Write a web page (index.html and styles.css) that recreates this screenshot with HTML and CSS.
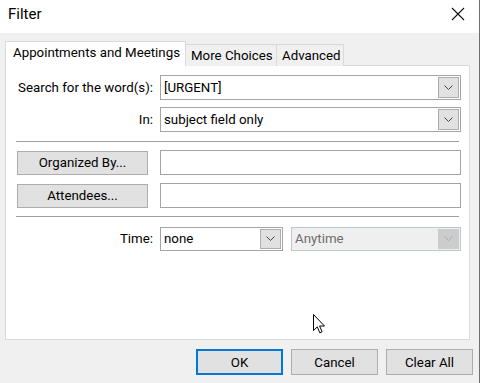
FILE: index.html
```html
<!DOCTYPE html>
<html lang="en">
<head>
    <meta charset="UTF-8">
    <title>Filter</title>
    <link rel="stylesheet" href="styles.css">
</head>
<body>
    <div class="window">
        <div class="titlebar">
            <span class="title">Filter</span>
            <svg class="close-icon" width="14" height="14" viewBox="0 0 14 14">
                <path d="M1 1 L13 13 M13 1 L1 13" stroke="#111" stroke-width="1.1" fill="none"/>
            </svg>
        </div>

        <div class="content">
            <div class="tabs">
                <div class="tab active">Appointments and Meetings</div>
                <div class="tab">More Choices</div>
                <div class="tab">Advanced</div>
            </div>

            <div class="panel">
                <div class="row">
                    <span class="label">Search for the word(s):</span>
                    <div class="combo">
                        <span class="combo-text">[URGENT]</span>
                        <span class="combo-arrow">
                            <svg width="9" height="6" viewBox="0 0 9 6"><polyline points="0.5,0.5 4.5,4.5 8.5,0.5" fill="none" stroke="#444" stroke-width="1"/></svg>
                        </span>
                    </div>
                </div>
                <div class="row">
                    <span class="label">In:</span>
                    <div class="combo">
                        <span class="combo-text">subject field only</span>
                        <span class="combo-arrow">
                            <svg width="9" height="6" viewBox="0 0 9 6"><polyline points="0.5,0.5 4.5,4.5 8.5,0.5" fill="none" stroke="#444" stroke-width="1"/></svg>
                        </span>
                    </div>
                </div>

                <div class="separator"></div>

                <div class="row row-button">
                    <button class="btn field-btn">Organized By...</button>
                    <input class="textbox" type="text">
                </div>
                <div class="row row-button">
                    <button class="btn field-btn">Attendees...</button>
                    <input class="textbox" type="text">
                </div>

                <div class="separator separator-low"></div>

                <div class="row row-time">
                    <span class="label">Time:</span>
                    <div class="time-combos">
                        <div class="combo combo-small">
                            <span class="combo-text">none</span>
                            <span class="combo-arrow">
                                <svg width="9" height="6" viewBox="0 0 9 6"><polyline points="0.5,0.5 4.5,4.5 8.5,0.5" fill="none" stroke="#444" stroke-width="1"/></svg>
                            </span>
                        </div>
                        <div class="combo combo-disabled">
                            <span class="combo-text">Anytime</span>
                            <span class="combo-arrow">
                                <svg width="9" height="6" viewBox="0 0 9 6"><polyline points="0.5,0.5 4.5,4.5 8.5,0.5" fill="none" stroke="#aaa" stroke-width="1"/></svg>
                            </span>
                        </div>
                    </div>
                </div>
            </div>

            <div class="actions">
                <button class="btn action-btn default">OK</button>
                <button class="btn action-btn">Cancel</button>
                <button class="btn action-btn">Clear All</button>
            </div>
        </div>

        <!-- mouse pointer captured in the screenshot -->
        <svg class="cursor" width="13" height="21" viewBox="0 0 13 21">
            <path d="M0.5 0.5 L0.5 16.5 L4.3 12.9 L6.8 18.8 L9.1 17.8 L6.6 12 L11.5 12 Z" fill="#fff" stroke="#000" stroke-width="1"/>
        </svg>
    </div>
</body>
</html>
```

FILE: styles.css
```css
* {
    margin: 0;
    padding: 0;
    box-sizing: border-box;
}

body {
    font-family: Roboto, "Noto Sans", sans-serif;
    font-size: 13.3px;
    color: #000;
    background: #fff;
    width: 481px;
    height: 383px;
    overflow: hidden;
}

.window {
    position: relative;
    width: 480px;
    height: 383px;
    background: #f0f0f0;
    border-right: 1px solid #6e6e6e;
}

.titlebar {
    height: 33px;
    background: #fff;
    display: flex;
    align-items: center;
    justify-content: space-between;
    padding: 0 14px 0 8px;
}

.title {
    font-size: 15px;
    margin-top: -5px;
}

.close-icon {
    margin-top: -5px;
}

.content {
    padding: 8px 9px 0 5px;
}

/* tabs */
.tabs {
    display: flex;
    align-items: flex-end;
    height: 25px;
    position: relative;
    z-index: 1;
}

.tab {
    height: 22px;
    padding: 0 5px;
    border: 1px solid #d9d9d9;
    border-left: none;
    border-bottom: none;
    background: #f0f0f0;
    line-height: 22px;
    white-space: nowrap;
}

.tab.active {
    height: 25px;
    width: 181px;
    padding-left: 7px;
    border-left: 1px solid #d9d9d9;
    background: #fff;
    line-height: 21px;
}

.tab:nth-child(2) {
    width: 91px;
}

.tab:nth-child(3) {
    width: 67px;
}

/* panel */
.panel {
    height: 275px;
    margin-top: -1px;
    background: #fff;
    border: 1px solid #d9d9d9;
    padding: 9px 8px 0 10px;
}

.row {
    display: grid;
    grid-template-columns: 137px 1fr;
    column-gap: 7px;
    align-items: center;
    height: 25px;
}

.row + .row {
    margin-top: 7px;
}

.row-button + .row-button {
    margin-top: 8px;
}

.label {
    text-align: right;
    white-space: nowrap;
}

.separator {
    height: 1px;
    background: #a0a0a0;
    margin: 9px 2px 8px 0;
}

.separator-low {
    margin: 8px 2px 9px 0;
}

/* combo boxes and text boxes */
.combo {
    height: 25px;
    border: 1px solid #a5a5a5;
    background: #fff;
    display: flex;
    align-items: center;
    justify-content: space-between;
    padding: 0 1px 0 3px;
}

.combo-text {
    white-space: nowrap;
}

.combo-arrow {
    width: 21px;
    height: 21px;
    background: #e1e1e1;
    border: 1px solid #adadad;
    display: flex;
    align-items: center;
    justify-content: center;
}

.combo-small {
    width: 123px;
    height: 24px;
}

.combo-small .combo-arrow {
    height: 20px;
}

.combo-disabled {
    flex: 1;
    height: 24px;
    background: #efefef;
    border-color: #b9c7dd;
    color: #6d6d6d;
}

.combo-disabled .combo-arrow {
    height: 20px;
    background: #cccccc;
    border-color: #cccccc;
}

.time-combos {
    display: flex;
    gap: 8px;
}

.textbox {
    height: 25px;
    border: 1px solid #a5a5a5;
    background: #fff;
    outline: none;
}

/* buttons */
.btn {
    font-family: inherit;
    font-size: 13.3px;
    color: #000;
    background: #e1e1e1;
    border: 1px solid #adadad;
}

.field-btn {
    width: 131px;
    height: 24px;
    margin-left: 1px;
}

.actions {
    display: flex;
    justify-content: flex-end;
    gap: 8px;
    margin: 9px -3px 0 0;
}

.action-btn {
    width: 87px;
    height: 26px;
}

.action-btn.default {
    border: 2px solid #0078d7;
}

.cursor {
    position: absolute;
    left: 313px;
    top: 314px;
}
```
